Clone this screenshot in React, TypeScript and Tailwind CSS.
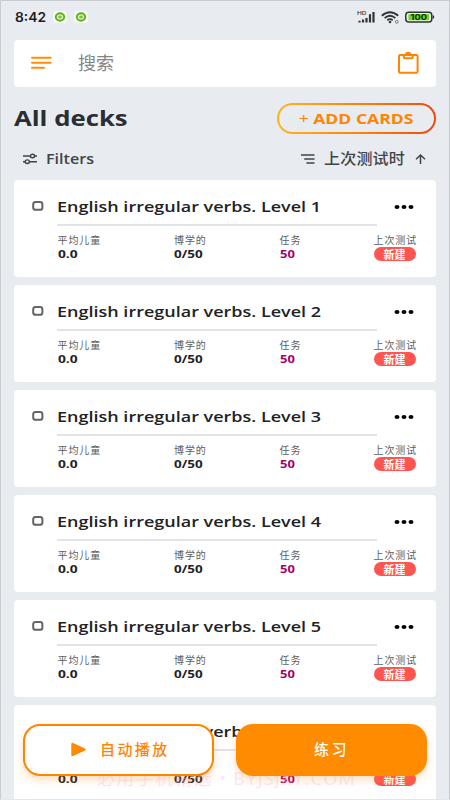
import React from 'react';

const decks = [1, 2, 3, 4, 5, 6];

function AppBadge() {
  return (
    <svg width="14" height="12" viewBox="0 0 14 12">
      <rect width="14" height="12" rx="2.5" fill="#f5faf1" />
      <ellipse cx="7" cy="6" rx="4.2" ry="3.7" fill="#d9efc6" stroke="#62b01e" strokeWidth="2" />
      <path d="M5 6h4M7 4.5v3" stroke="#62b01e" strokeWidth="1" />
    </svg>
  );
}

function StatusBar() {
  return (
    <header className="flex h-10 items-center justify-between pr-[14px] pl-[14px] pb-[8px]">
      <div className="flex h-4 items-center">
        <span className="w-[38px] text-[13px] leading-4 font-semibold whitespace-nowrap text-[#1c1d1f]">
          <span className="inline-block origin-left scale-x-[1.06]">8:42</span>
        </span>
        <div className="flex gap-[7px]">
          <AppBadge />
          <AppBadge />
        </div>
      </div>
      <div className="flex h-4 items-center">
        <svg width="20" height="16" viewBox="0 0 20 16">
          <text x="0" y="5.9" fontSize="5.4" fontWeight="500" fill="#333" fontFamily="Inter, sans-serif" textLength="9.5" lengthAdjust="spacingAndGlyphs">HD</text>
          <path d="M2.5 13.5v-1.8M6 13.5v-3M9.5 13.5v-4.5M13 13.5V5.2M16.5 13.5V3" stroke="#333" strokeWidth="2.2" />
        </svg>
        <svg className="ml-[4px]" width="20" height="16" viewBox="0 0 20 16">
          <g fill="none" stroke="#303235" strokeWidth="1.8">
            <path d="M0.8 6.8Q9 -0.2 17.2 6.8" />
            <path d="M3.6 9.1Q9 4.5 14.4 9.1" />
            <path d="M6.3 11.3Q9 9 11.7 11.3" />
          </g>
          <circle cx="9" cy="13" r="1.3" fill="#303235" />
          <circle cx="15.8" cy="12.8" r="1.4" fill="none" stroke="#777" strokeWidth="1" />
        </svg>
        <svg className="ml-[4px]" width="30" height="16" viewBox="0 0 30 16">
          <rect x="0.8" y="3.2" width="26" height="9.9" rx="3" fill="#eef4e9" stroke="#303235" strokeWidth="1.5" />
          <rect x="3.4" y="5" width="20.8" height="6.3" rx="1" fill="#66dc22" />
          <path d="M28.4 6.5v3" stroke="#303235" strokeWidth="1.4" />
          <text x="5.5" y="10.9" fontSize="7.6" fontWeight="700" fill="#182512" fontFamily="Inter, sans-serif" textLength="16.5" lengthAdjust="spacingAndGlyphs">100</text>
        </svg>
      </div>
    </header>
  );
}

function SearchBar() {
  return (
    <div className="flex h-[47px] items-center rounded-[4px] bg-white pr-[16px] pb-[2px] pl-[17px]">
      <svg width="21" height="14" viewBox="0 0 21 14">
        <path d="M1 1.8h18.6M1 6.8h18.6M1 11.8h12" stroke="#ff8c05" strokeWidth="2" strokeLinecap="round" />
      </svg>
      <span className="ml-[26px] flex-1 text-[18px] leading-6 text-[#858585]">搜索</span>
      <svg width="24" height="24" viewBox="0 0 24 24" fill="none" stroke="#ff8400" strokeWidth="2">
        <rect x="3" y="3.9" width="18.6" height="17.9" rx="1.2" />
        <path d="M7.8 4v2q0 1.3 1.4 1.3h6.2q1.4 0 1.4-1.3V4" />
        <path d="M9.9 4.2a2.4 2.4 0 0 1 4.8 0" />
      </svg>
    </div>
  );
}

function Heading() {
  return (
    <div className="flex h-[31px] items-center justify-between">
      <h1 className="pb-[3px] text-[22px] leading-none font-bold whitespace-nowrap text-[#2b2e31]">
        <span className="inline-block origin-left scale-x-[1.17]">All decks</span>
      </h1>
      <button className="h-[31px] w-[159px] rounded-full bg-linear-to-r from-[#ffb51c] via-[#ff8208] to-[#f2460c] p-[1.6px]">
        <span className="flex h-full w-full items-center justify-center rounded-full bg-[#e8ebf0] pb-px text-[15px] leading-none font-bold whitespace-nowrap text-[#ff8400]">
          <span className="inline-block scale-x-[1.17]"><span className="font-normal">+</span> ADD CARDS</span>
        </span>
      </button>
    </div>
  );
}

function FilterRow() {
  return (
    <div className="mt-[10px] flex h-[30px] items-center pr-[10px] pl-[9px] text-[#424447]">
      <svg width="15" height="12" viewBox="0 0 15 12" fill="none" stroke="currentColor" strokeWidth="1.4">
        <path d="M0 3h7.5M11.5 3h2.5M0 8.7h2.3M6.3 8.7H14" />
        <ellipse cx="9.5" cy="3" rx="2.1" ry="1.8" />
        <ellipse cx="4.3" cy="8.7" rx="2.1" ry="1.8" />
      </svg>
      <span className="ml-[8px] flex-1 text-[14px] leading-none font-semibold">
        <span className="inline-block origin-left scale-x-[1.15]">Filters</span>
      </span>
      <svg width="14" height="10" viewBox="0 0 14 10" stroke="currentColor" strokeWidth="1.4">
        <path d="M0 1h13.5M3.2 5h10.3M5.4 9h8.1" />
      </svg>
      <span className="ml-[9px] text-[16px] leading-none font-medium whitespace-nowrap">
        <span className="inline-block -translate-y-px scale-y-[0.92] tracking-[0.2px]">上次测试时</span>
      </span>
      <svg className="ml-[10px]" width="11" height="10" viewBox="0 0 11 10" fill="none" stroke="currentColor" strokeWidth="1.5">
        <path d="M5.5 10V1M1 5.2 5.5 1 10 5.2" />
      </svg>
    </div>
  );
}

function Stat({ label, children }: { label: string; children: React.ReactNode }) {
  return (
    <div className="whitespace-nowrap">
      <div className="text-[10px] leading-[14px] font-normal tracking-[0.9px] text-[#5c5e60]">{label}</div>
      {children}
    </div>
  );
}

function DeckCard({ level }: { level: number }) {
  return (
    <section className="h-[97px] shrink-0 rounded-[4px] bg-white pt-[14px] pl-[18px]">
      <div className="flex h-[26px] items-center pb-px">
        <svg className="-mt-px" width="12" height="10" viewBox="0 0 12 10">
          <rect x="1.2" y="1" width="9.2" height="7.8" rx="2.4" fill="none" stroke="#626468" strokeWidth="2" />
        </svg>
        <h2 className="ml-[13px] w-[337px] text-[15px] leading-none font-semibold whitespace-nowrap text-[#202225]">
          <span className="inline-block origin-left scale-x-[1.2]">English irregular verbs. Level {level}</span>
        </h2>
        <svg className="mt-px" width="20" height="6" viewBox="0 0 20 6" fill="#050505">
          <ellipse cx="3" cy="3" rx="2.5" ry="2.1" />
          <ellipse cx="10" cy="3" rx="2.5" ry="2.1" />
          <ellipse cx="17" cy="3" rx="2.5" ry="2.1" />
        </svg>
      </div>
      <div className="mt-[4px] ml-[25px] h-[1.5px] w-[320px] bg-[#e2e3e6]" />
      <div className="mt-[7.5px] ml-[25.5px] grid grid-cols-[116.5px_105.5px_94px_50px] text-[11px] leading-[14px] font-bold text-[#202225]">
        <Stat label="平均儿童"><span className="inline-block origin-left scale-x-[1.25]">0.0</span></Stat>
        <Stat label="博学的"><span className="inline-block origin-left scale-x-[1.22]">0/50</span></Stat>
        <Stat label="任务"><span className="inline-block origin-left scale-x-[1.18] text-[#a60062]">50</span></Stat>
        <Stat label="上次测试">
          <div className="flex h-[14px] w-[42px] items-center justify-center rounded-full bg-[#ff5550] text-[11px] leading-none text-white">新建</div>
        </Stat>
      </div>
    </section>
  );
}

export default function App() {
  return (
    <div className="relative h-[800px] w-[450px] overflow-hidden border border-[#c8cbd0] border-b-[#e4e6ea] bg-[#e8ebf0] font-['Open_Sans','Noto_Sans_CJK_SC',sans-serif]">
      <div className="font-[Inter,sans-serif]">
        <StatusBar />
      </div>
      <main className="flex flex-col px-[13px]">
        <div className="-mt-px"><SearchBar /></div>
        <div className="mt-[16px]"><Heading /></div>
        <FilterRow />
        <div className="mt-[6px] flex flex-col gap-2">
          {decks.map((level) => <DeckCard key={level} level={level} />)}
        </div>
      </main>
      <div className="absolute top-[765px] left-[96px] text-[18px] leading-6 tracking-[1.35px] whitespace-nowrap text-[#f9bcec]/40">
        必用手机精选 • BYJSJXY.COM
      </div>
      <div className="absolute top-[722.5px] left-[22px] flex gap-[22px] text-[15px] leading-none font-medium tracking-[2.4px]">
        <button className="flex h-[52px] w-[191px] items-center rounded-[17px] border-2 border-[#ff8400] bg-white pl-[45px] text-[#ff8400] shadow-[0_4px_8px_rgba(255,132,0,0.25)]">
          <svg width="17" height="15" viewBox="0 0 17 15">
            <path d="M2.5 2v11L14.5 7.5Z" fill="#ff8900" stroke="#ff8900" strokeWidth="2.4" strokeLinejoin="round" />
          </svg>
          <span className="ml-[13px]">自动播放</span>
        </button>
        <button className="flex h-[52px] w-[191px] items-center justify-center rounded-[17px] bg-[#ff8b00] text-white shadow-[0_4px_8px_rgba(255,132,0,0.25)]">
          <span>练习</span>
        </button>
      </div>
    </div>
  );
}
